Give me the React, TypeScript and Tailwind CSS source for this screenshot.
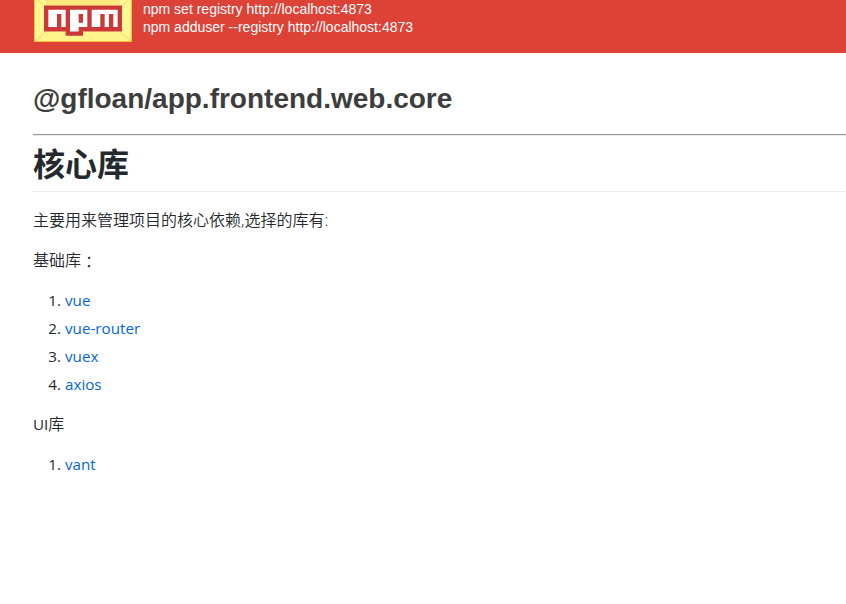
const cjk = "font-['Open_Sans','Noto_Sans_CJK_SC',sans-serif]";

function Logo() {
  return (
    <svg width="98" height="42" viewBox="0 0 98 42" className="block shrink-0">
      <rect width="98" height="42" fill="#fffa99" />
      <path d="M0 0H13V31L0 42Z" fill="#fff793" />
      <path d="M98 0H85V31L98 42Z" fill="#fff793" />
      <path d="M12 0H86V5H12Z" fill="#ffe780" />
      <path d="M0 42L12 32H86L98 42Z" fill="#fff48b" />
      <path d="M1 41L12 32M97 41L86 32M3 0L10 5M95 0L88 5" stroke="#f9d363" strokeWidth="1" fill="none" />
      <path d="M0.5 0V41.5H97.5V0" fill="none" stroke="#fbbd3a" strokeWidth="1" />
      <g transform="translate(10 5.4) scale(4.3333)">
        <path d="M0 0H18V6H9V7H5V6H0Z" fill="#cb3837" />
        <path d="M1 1H5V5H4V2H3V5H1ZM6 1H10V5H8V6H6ZM8 2V4H9V2ZM11 1H17V5H16V2H15V5H14V2H13V5H11Z" fill="#fff" fillRule="evenodd" />
      </g>
    </svg>
  );
}

function LinkList({ items }: { items: string[] }) {
  return (
    <ol className="mb-[14px] text-[15.2px] font-normal">
      {items.map((item, i) => (
        <li key={item} className="flex h-7 items-center leading-6">
          <span className="w-7 text-right">{i + 1}.</span>
          <a className="ml-1 text-[#0366d6]">{item}</a>
        </li>
      ))}
    </ol>
  );
}

export default function App() {
  return (
    <div className="h-[604px] w-full overflow-hidden bg-white">
      <header className="flex h-[53px] bg-[#dd4237] pl-[34px] font-['Liberation_Sans',sans-serif] text-[14px] leading-[18px] text-white">
        <Logo />
        <div className="ml-[11px] whitespace-nowrap">
          <p>npm set registry http://localhost:4873</p>
          <p>npm adduser --registry http://localhost:4873</p>
        </div>
      </header>
      <main className="pl-[33px]">
        <h2 className="h-[81px] pt-[29px] font-['Liberation_Sans',sans-serif] text-[28px] leading-[34px] font-bold text-[#3d3d3d]">
          @gfloan/app.frontend.web.core
        </h2>
        <hr className="h-[2px] border-t border-b border-t-[#999] border-b-[#ececec]" />
        <article className={cjk + " text-[16px] leading-6 font-[350] text-[#24292e]"}>
          <h1 className="mb-4 h-14 border-b border-[#eaecef] pt-2 text-[32px] leading-10 font-bold">核心库</h1>
          <p className="mb-4 h-6">主要用来管理项目的核心依赖,选择的库有:</p>
          <p className="mb-[14px] flex h-6">
            基础库<span className="font-['Noto_Sans_CJK_JP',sans-serif] leading-[26px]">：</span>
          </p>
          <LinkList items={["vue", "vue-router", "vuex", "axios"]} />
          <p className="mb-[14px] h-6">
            <span className="text-[15.2px] font-normal">UI</span>库
          </p>
          <LinkList items={["vant"]} />
        </article>
      </main>
    </div>
  );
}
